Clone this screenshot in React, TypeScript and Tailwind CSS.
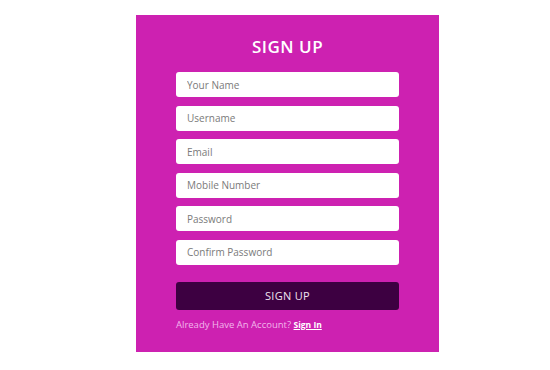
import React from "react";

const fields = ["Your Name", "Username", "Email", "Mobile Number", "Password", "Confirm Password"];

export default function App() {
  return (
    <div className="min-h-[370px] w-[550px] bg-white pt-[15px] pl-[136px]" style={{ fontFamily: '"Open Sans", "Noto Sans", sans-serif' }}>
      <div className="w-[303px] h-[337px] bg-[#cd21b1] px-10 pt-[21px]">
        <h1 className="text-center text-[17px] leading-[22px] font-semibold text-white tracking-[0.5px]">SIGN UP</h1>
        <div className="mt-[14px] flex flex-col gap-[8.6px]">
          {fields.map((f) => (
            <input
              key={f}
              placeholder={f}
              className="h-[25px] w-full rounded-[3px] bg-white px-[11px] text-[10px] text-gray-700 placeholder:text-[#7a7a7a] outline-none"
            />
          ))}
        </div>
        <button className="mt-[17px] h-[28px] w-full rounded-[3px] bg-[#3d0041] text-[11px] text-[#f1e3f0] tracking-[0.3px]">
          SIGN UP
        </button>
        <p className="mt-[8px] text-[9.5px] leading-[13px] text-[#f2b7ec]">
          Already Have An Account?{" "}
          <a className="text-[8.5px] font-bold text-white underline">Sign In</a>
        </p>
      </div>
    </div>
  );
}
